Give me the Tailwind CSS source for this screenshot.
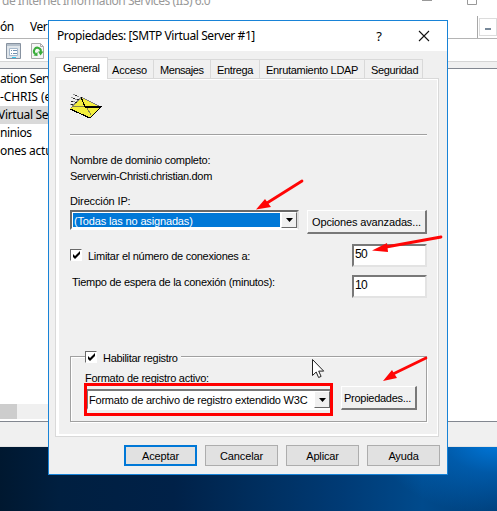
<!DOCTYPE html>
<html lang="es">
<head>
<meta charset="utf-8">
<title>Propiedades</title>
<script src="https://cdn.jsdelivr.net/npm/@tailwindcss/browser@4"></script>
</head>
<body class="overflow-hidden">
<div class="relative w-[497px] h-[511px] overflow-hidden bg-[radial-gradient(ellipse_120px_75px_at_497px_440px,#007be0_0%,#0070d080_45%,#0060b400_100%),linear-gradient(90deg,#001830_0%,#001f40_12%,#002148_35%,#002d5c_50%,#003a74_68%,#004a8c_85%,#003f7a_100%)] text-black whitespace-nowrap font-['Liberation_Sans',sans-serif] text-[11px] leading-[14px]">

  <!-- Management console window -->
  <div class="flex flex-col h-[447px] bg-white font-['Noto_Sans','Open_Sans',sans-serif]">
    <div class="h-4 flex justify-between text-[#999]">
      <span class="-mt-[7px] ml-[2px] text-[12px] leading-[16px] tracking-[-0.48px]">de Internet Information Services (IIS) 6.0</span>
      <svg class="w-[80px] h-4 mr-px" viewBox="0 0 80 16" fill="none" stroke="#999"><path d="M6 .5h10M51.500 -1v5.500h9v-5.500"/></svg>
    </div>
    <div class="h-[23px] flex border-b border-[#b4b4b4]">
      <div class="flex-1 flex gap-[16px] pt-[3px] text-[12px] leading-4 tracking-[-0.4px]"><span>ón</span><span>Ver</span></div>
      <div class="w-[20px] border-l border-[#a8a8a8] flex pt-[2px] pl-px"><div class="w-[18px] h-[18px] border border-[#dcdcdc] flex justify-center items-center"><div class="w-[6px] h-[2px] bg-[#778899] mt-1"></div></div></div>
    </div>
    <div class="h-[22px] flex gap-[10px] pl-[6px] pt-[3px]">
      <svg class="w-[15px] h-[17px]" viewBox="0 0 15 17"><path d="M.5 1.500h14v15H.5z" fill="#dfe5ea" stroke="#8792a0"/><path d="M1 3h13" stroke="#b4bfca" stroke-width="2"/><path d="M3.500 6.500h8v7h-8z" fill="#fff" stroke="#a7b9cc"/><path d="M5 8.500h1M7 8.500h4M5 11.500h1M7 11.500h4" stroke="#6f90b0"/><path d="M6 15.500h4" stroke="#2cc4ee"/></svg>
      <svg class="w-[13px] h-[17px]" viewBox="0 0 13 17"><path d="M.5 1.500h9l3 3v12H.5z" fill="#f6f6f6" stroke="#aaa"/><path d="M9.500 1.500v3h3" fill="none" stroke="#aaa"/><path d="M4.500 12a3.400 3.400 0 1 1 5-1.500" fill="none" stroke="#3aac3a" stroke-width="2"/><path d="M7 9.500h5.500l-3 4zM2.500 13.500l4-3.500v4z" fill="#3aac3a"/></svg>
    </div>
    <div class="h-[8px] bg-[#f0f0f0] border-t border-[#d5d5d5] border-b border-b-[#828790]"></div>
    <div class="flex-1 pt-px text-[12px] leading-[18px] tracking-[-0.4px]">
      <div class="h-[18px]">ation Servi</div>
      <div class="h-[18px] tracking-[-0.1px]">-CHRIS (eq</div>
      <div class="h-[18px] w-12 bg-[#d9d9d9]"><span class="-ml-[2px] tracking-[-0.3px]">Virtual Ser</span></div>
      <div class="h-[18px]">ninios</div>
      <div class="h-[18px] tracking-[-0.25px]">ones actuales</div>
    </div>
    <div class="h-[15px] w-12 bg-[#f0f0f0]"><div class="w-[17px] h-full bg-[#cdcdcd]"></div></div>
    <div class="h-[26px] mt-[2px] bg-[#f0f0f0] border-t border-[#828790] border-b border-b-[#e4e4e4]"></div>
  </div>

  <!-- Properties dialog -->
  <div class="absolute left-[48px] top-[20px] w-[400px] h-[455px] bg-[#f0f0f0] border border-[#1883d7] flex flex-col">
    <div class="h-[30px] bg-white flex items-center pl-2 pr-[17px] font-['Noto_Sans','Open_Sans',sans-serif]">
      <span class="text-[12px] tracking-[-0.41px] flex-1">Propiedades: [SMTP Virtual Server #1]</span>
      <span class="text-[13px] mr-[36px]">?</span>
      <svg class="w-[12px] h-[12px]" viewBox="0 0 12 12" stroke="#111" stroke-width="1.100"><path d="M1 1l10 10M11 1L1 11"/></svg>
    </div>
    <div class="flex items-end h-[28px] pl-[6px] relative z-10">
      <div class="w-[53px] h-[22px] bg-white border border-b-0 border-[#d9d9d9] pt-[3px] pl-[7px] tracking-[-0.35px]">General</div>
      <div class="w-[46px] h-[19px] mb-px border-t border-r border-[#d9d9d9] pt-[3px] pl-[4px] tracking-[-0.2px]">Acceso</div>
      <div class="w-[57px] h-[19px] mb-px border-t border-r border-[#d9d9d9] pt-[3px] pl-[6px] tracking-[-0.45px]">Mensajes</div>
      <div class="w-[49px] h-[19px] mb-px border-t border-r border-[#d9d9d9] pt-[3px] pl-[6px] tracking-[-0.35px]">Entrega</div>
      <div class="w-[105px] h-[19px] mb-px border-t border-r border-[#d9d9d9] pt-[3px] pl-[6px] tracking-[-0.3px]">Enrutamiento LDAP</div>
      <div class="w-[58px] h-[19px] mb-px border-t border-r border-[#d9d9d9] pt-[3px] pl-[6px] tracking-[-0.33px]">Seguridad</div>
    </div>
    <div class="-mt-px ml-[6px] w-[384px] h-[359px] border border-[#d9d9d9] bg-white pl-[3px] pr-px pt-px pb-[2px]">
      <div class="h-full bg-[#f0f0f0] pl-[11px] pr-[10px] flex flex-col">
        <div class="h-[55px] border-b border-[#a0a0a0] pt-[14px]">
          <svg class="w-[32px] h-[28px]" viewBox="0 0 32 28" shape-rendering="crispEdges" fill="none">
            <path d="M11 3L31 13 20 24 0 15z" fill="#f3ef3e"/>
            <path d="M11 3L31 13M1 14L11 3" stroke="#808080" stroke-width="1.200"/>
            <path d="M2 12.500L14 12.500M17 14L21 21" stroke="#858550"/>
            <path d="M0 15L20 24 31 13H15L11 3" stroke="#000" stroke-width="1.200"/>
            <path d="M5 1.500h2M3 4.500h2M7 5.500h2M1 7.500h2M5 8.500h2M1 10.500h2" stroke="#222"/><path d="M3 .5h2M7 2.500h2M9 4.500h2M1 3.500h2M5 5.500h2M3 7.500h2M0 10.500h1" stroke="#999"/>
          </svg>
        </div>
        <div class="border-t border-white pt-[17px] leading-[15px] h-[75px]">
          <div class="h-4 tracking-[-0.24px]">Nombre de dominio completo:</div>
          <div class="h-[25px] tracking-[-0.33px]">Serverwin-Christi.christian.dom</div>
          <div class="tracking-[-0.14px]">Dirección IP:</div>
        </div>
        <div class="flex justify-between items-start h-[34px]">
          <div class="w-[229px] h-[20px] border-2 border-[#696969] border-r-[#dedede] border-b-white bg-white flex">
            <div class="flex-1 m-px bg-[#0078d7] text-white pl-px leading-[16px] tracking-[-0.15px]">(Todas las no asignadas)</div>
            <div class="w-4 h-4 bg-[#f0f0f0] border border-white border-r-[#696969] border-b-[#696969] flex items-center justify-center"><svg class="w-[7px] h-1" viewBox="0 0 7 4"><path d="M0 0h7L3.500 4z"/></svg></div>
          </div>
          <div class="w-[120px] h-[24px] border border-white border-r-2 border-b-2 border-r-[#787878] border-b-[#787878] text-center leading-[22px] tracking-[-0.14px]">Opciones avanzadas...</div>
        </div>
        <div class="flex h-[31px]">
          <div class="mt-[5px] w-[12px] h-[12px] border border-[#696969] border-r-white border-b-white bg-white"><svg class="w-[10px] h-[10px]" viewBox="0 0 10 10"><path d="M2 4v3l2 2 5-5V1L4 6z"/></svg></div>
          <div class="flex-1 ml-[6px] mt-[5px] tracking-[-0.27px]">Limitar el número de conexiones a:</div>
          <div class="w-[75px] h-[23px] border-2 border-[#787878] border-r-[#e3e3e3] border-b-[#e3e3e3] bg-white pl-px pt-px text-[12px] leading-[15px] tracking-[-0.6px]">50</div>
        </div>
        <div class="flex h-[76px]">
          <div class="flex-1 ml-[2px] tracking-[-0.27px]">Tiempo de espera de la conexión (minutos):</div>
          <div class="w-[75px] h-[23px] border-2 border-[#787878] border-r-[#e3e3e3] border-b-[#e3e3e3] bg-white pl-px pt-px text-[12px] leading-[15px] tracking-[-0.6px]">10</div>
        </div>
        <div class="mt-[5px] w-[357px] h-[66px] border border-[#a0a0a0] shadow-[1px_1px_0_#fff,inset_1px_1px_0_#fff] px-[13px] pr-[9px]">
          <div class="-mt-[7px] ml-px w-[96px] h-[14px] bg-[#f0f0f0] flex">
            <div class="mt-px w-[12px] h-[12px] border border-[#696969] border-r-white border-b-white bg-white"><svg class="w-[10px] h-[10px]" viewBox="0 0 10 10"><path d="M2 4v3l2 2 5-5V1L4 6z"/></svg></div>
            <span class="ml-[6px] mt-px tracking-[-0.3px]">Habilitar registro</span>
          </div>
          <div class="mt-[7px] ml-px h-[12px] tracking-[-0.26px]">Formato de registro activo:</div>
          <div class="flex justify-between items-start">
            <div class="w-[249px] h-[33px] border-[3px] border-[#ff0000] pt-[3px]">
              <div class="h-[21px] border-y-2 border-l border-[#787878] border-b-white bg-white flex justify-between">
                <span class="pl-px leading-[18px] tracking-[-0.22px]">Formato de archivo de registro extendido W3C</span>
                <div class="w-4 h-[17px] bg-[#f0f0f0] border border-white border-r-[#696969] border-b-[#696969] flex items-center justify-center shrink-0"><svg class="w-[7px] h-1" viewBox="0 0 7 4"><path d="M0 0h7L3.500 4z"/></svg></div>
              </div>
            </div>
            <div class="mt-[3px] w-[76px] h-[24px] border border-white border-r-2 border-b-2 border-r-[#787878] border-b-[#787878] pl-[2px] leading-[22px] tracking-[-0.27px]">Propiedades...</div>
          </div>
        </div>
      </div>
    </div>
    <div class="flex gap-2 mt-[8px] pl-[75px] text-center tracking-[-0.15px] leading-[20px]">
      <div class="w-[73px] h-[21px] bg-[#e1e1e1] border-2 border-[#0078d7] leading-[18px]">Aceptar</div>
      <div class="w-[73px] h-[21px] bg-[#e1e1e1] border border-[#adadad]">Cancelar</div>
      <div class="w-[73px] h-[21px] bg-[#e1e1e1] border border-[#adadad]">Aplicar</div>
      <div class="w-[73px] h-[21px] bg-[#e1e1e1] border border-[#adadad]">Ayuda</div>
    </div>
  </div>

  <!-- Callout arrows and mouse pointer -->
  <svg class="absolute inset-0 z-20 w-[497px] h-[511px]" viewBox="0 0 497 511">
    <g stroke="#ff0505" stroke-width="2.800" stroke-linecap="round" fill="#ff0505">
      <path d="M302 181L267 203M441 237L386 247M426 358L393 374"/>
      <path stroke="none" d="M256 209.500L265 199 271 207zM372 250.500L387 243 388 252zM383 381L392 370 397 378z"/>
    </g>
    <path d="M312.500 359.500v16l3.700-3.500 2.400 5.500 2.500-1.100-2.400-5.300h5z" fill="#fff" stroke="#222"/>
  </svg>
</div>
</body>
</html>
